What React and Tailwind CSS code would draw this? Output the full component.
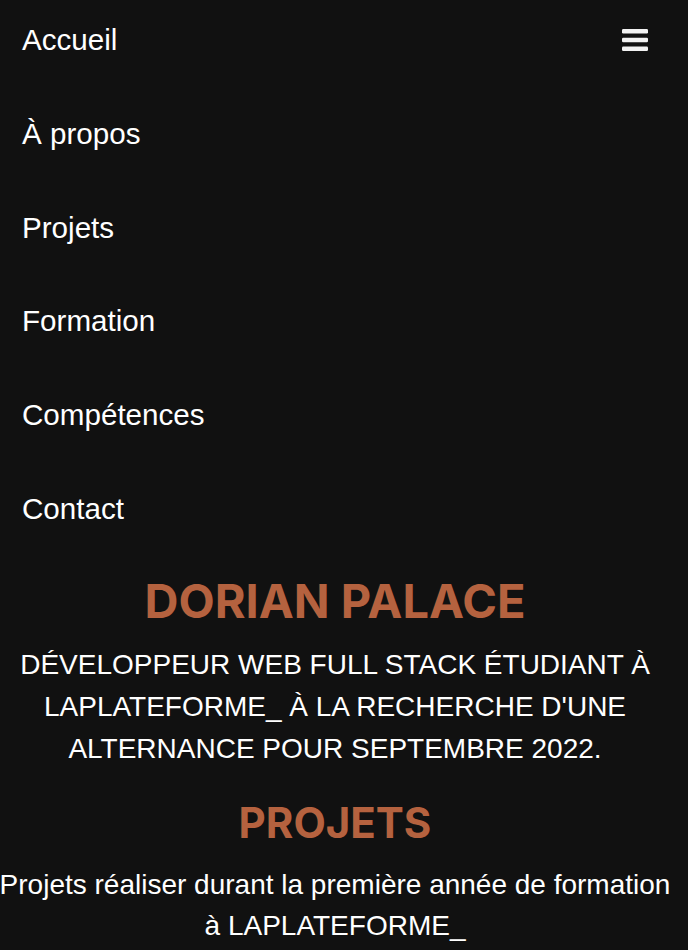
import React from "react";

const links = ["Accueil", "À propos", "Projets", "Formation", "Compétences", "Contact"];

function Bars() {
  return (
    <svg width="26" height="22" viewBox="0 0 26 22" fill="#f2f2f2">
      <rect x="0" y="0" width="26" height="4.4" rx="1.2" />
      <rect x="0" y="8.8" width="26" height="4.4" rx="1.2" />
      <rect x="0" y="17.6" width="26" height="4.4" rx="1.2" />
    </svg>
  );
}

export default function App() {
  return (
    <div className="bg-[#111111] min-h-screen text-white font-['Liberation_Sans',Arial,sans-serif]">
      <div className="w-[670px]">
        {/* nav, opened on mobile */}
        <header className="flex justify-between px-[22px] pt-[18px]">
          <ul className="flex flex-col gap-[49.4px]">
            {links.map((l) => (
              <li key={l} className="text-[29.6px] leading-[44.4px]">
                {l}
              </li>
            ))}
          </ul>
          <button className="h-[44.4px] flex items-center">
            <Bars />
          </button>
        </header>

        <main className="flex flex-col items-center text-center mt-[46px]">
          <h1 className="font-['Inter',sans-serif] font-bold text-[47px] leading-[48px] text-[#b5623f]">
            DORIAN PALACE
          </h1>
          <p className="mt-[19px] text-[28px] leading-[42px] whitespace-nowrap">
            DÉVELOPPEUR WEB FULL STACK ÉTUDIANT À
            <br />
            LAPLATEFORME_ À LA RECHERCHE D'UNE
            <br />
            ALTERNANCE POUR SEPTEMBRE 2022.
          </p>

          <h2 className="mt-[29px] font-['Inter',sans-serif] font-bold text-[42px] leading-[48px] text-[#b5623f]">
            PROJETS
          </h2>
          <p className="mt-[17px] text-[28px] leading-[41px] whitespace-nowrap">
            Projets réaliser durant la première année de formation
            <br />
            à LAPLATEFORME_
          </p>
        </main>
      </div>
    </div>
  );
}
